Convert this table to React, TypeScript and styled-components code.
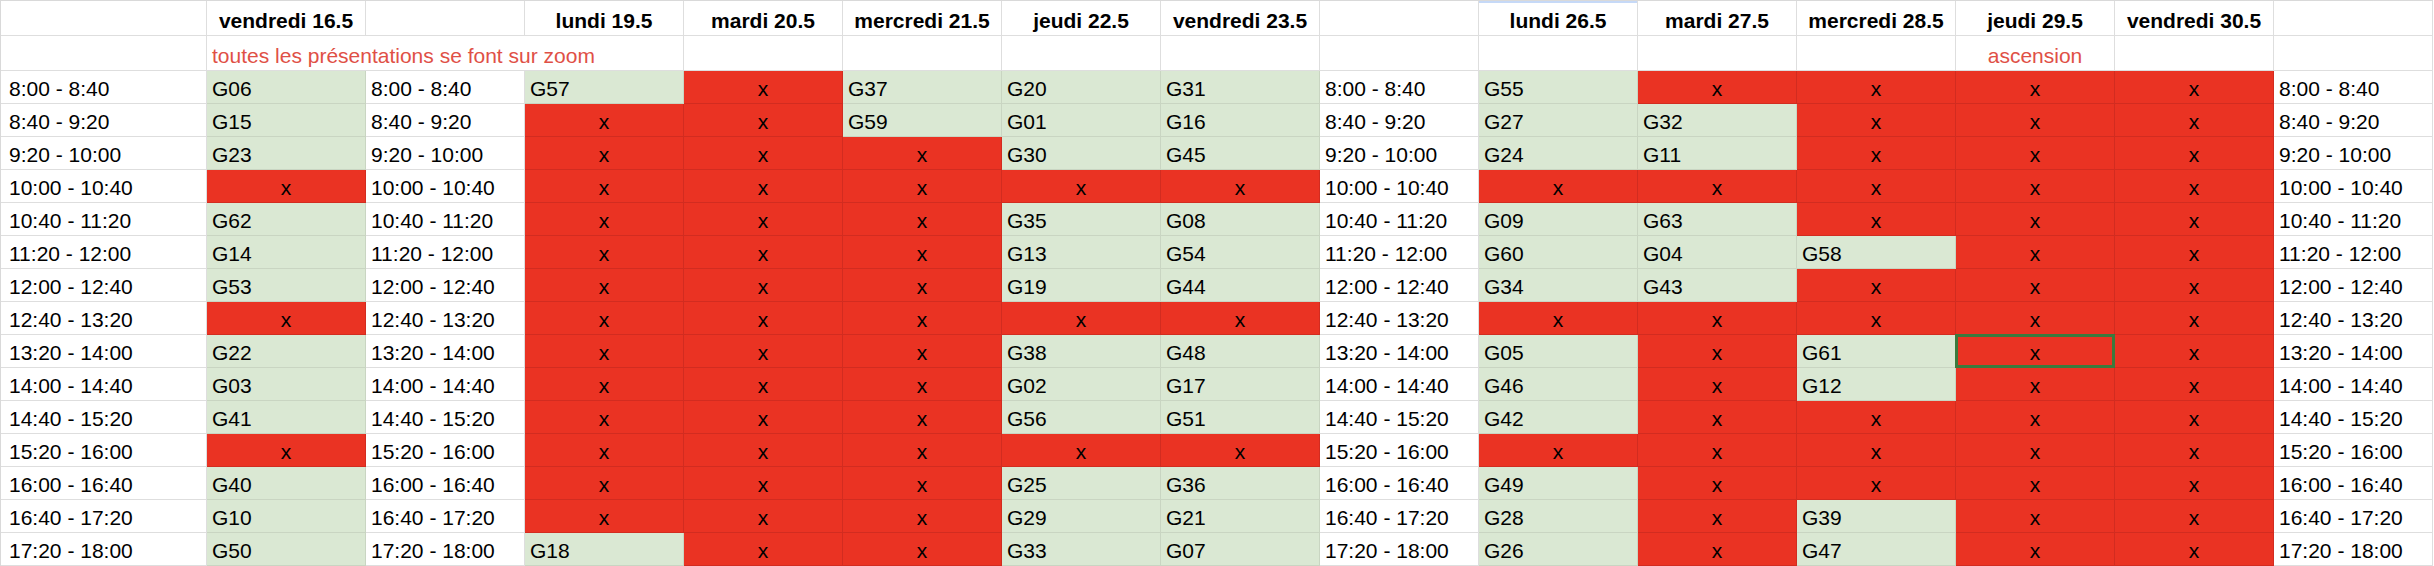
import React from "react";
import styled, { createGlobalStyle, css } from "styled-components";

const GlobalStyle = createGlobalStyle`
  html, body { margin: 0; padding: 0; background: #ffffff; }
  body { font-family: "Liberation Sans", Arial, sans-serif; }
`;

type Kind = "blank" | "head" | "note" | "time" | "slot" | "off";

const Sheet = styled.div`
  display: grid;
  grid-template-columns: 206px repeat(14, 159px);
  grid-template-rows: 35px 35px repeat(15, 33px);
  border-top: 1px solid #d9d9d9;
  border-left: 1px solid #d9d9d9;
  width: max-content;
  font-family: "Liberation Sans", Arial, sans-serif;
  font-size: 21px;
  color: #000000;
`;

const kindStyles: Record<Kind, ReturnType<typeof css>> = {
  blank: css`
    background: #ffffff;
  `,
  head: css`
    background: #ffffff;
    justify-content: center;
    font-weight: 700;
  `,
  note: css`
    background: #ffffff;
    color: #df5046;
  `,
  time: css`
    background: #ffffff;
  `,
  slot: css`
    background: #dae8d3;
    border-right-color: #c9d5c2;
    border-bottom-color: #c9d5c2;
  `,
  off: css`
    background: #ea3323;
    justify-content: center;
    border-right-color: #d22c20;
    border-bottom-color: #d22c20;
  `,
};

const Cell = styled.div<{ $kind: Kind; $first?: boolean; $span?: number; $center?: boolean; $mark?: boolean }>`
  position: relative;
  box-sizing: border-box;
  display: flex;
  align-items: flex-end;
  padding: 0 5px 2px ${(p) => (p.$first ? 8 : 5)}px;
  white-space: nowrap;
  line-height: normal;
  border-right: 1px solid #dedede;
  border-bottom: 1px solid #dedede;
  grid-column: span ${(p) => p.$span ?? 1};
  ${(p) => kindStyles[p.$kind]}
  ${(p) => p.$center && css`justify-content: center;`}
  ${(p) =>
    p.$mark &&
    css`
      background-image: linear-gradient(#c6d9f7, #c6d9f7);
      background-size: 100% 2px;
      background-repeat: no-repeat;
      background-position: top left;
    `}
`;

const Selection = styled.div`
  position: absolute;
  top: -1px;
  left: -1px;
  right: -1px;
  bottom: -1px;
  border: 3px solid #3b7a3d;
  pointer-events: none;
`;

const times = [
  "8:00 - 8:40",
  "8:40 - 9:20",
  "9:20 - 10:00",
  "10:00 - 10:40",
  "10:40 - 11:20",
  "11:20 - 12:00",
  "12:00 - 12:40",
  "12:40 - 13:20",
  "13:20 - 14:00",
  "14:00 - 14:40",
  "14:40 - 15:20",
  "15:20 - 16:00",
  "16:00 - 16:40",
  "16:40 - 17:20",
  "17:20 - 18:00",
];

const X = "x";
const allOff = Array(11).fill(X);
// columns: V16, L19, Ma20, Me21, J22, V23, L26, Ma27, Me28, J29, V30
const slots: string[][] = [
  ["G06", "G57", X, "G37", "G20", "G31", "G55", X, X, X, X],
  ["G15", X, X, "G59", "G01", "G16", "G27", "G32", X, X, X],
  ["G23", X, X, X, "G30", "G45", "G24", "G11", X, X, X],
  allOff,
  ["G62", X, X, X, "G35", "G08", "G09", "G63", X, X, X],
  ["G14", X, X, X, "G13", "G54", "G60", "G04", "G58", X, X],
  ["G53", X, X, X, "G19", "G44", "G34", "G43", X, X, X],
  allOff,
  ["G22", X, X, X, "G38", "G48", "G05", X, "G61", X, X],
  ["G03", X, X, X, "G02", "G17", "G46", X, "G12", X, X],
  ["G41", X, X, X, "G56", "G51", "G42", X, X, X, X],
  allOff,
  ["G40", X, X, X, "G25", "G36", "G49", X, X, X, X],
  ["G10", X, X, X, "G29", "G21", "G28", X, "G39", X, X],
  ["G50", "G18", X, X, "G33", "G07", "G26", X, "G47", X, X],
];

const selected = { row: 8, day: 9 };

function Slot({ value, isSelected }: { value: string; isSelected: boolean }) {
  const off = value === X;
  return (
    <Cell $kind={off ? "off" : "slot"}>
      {value}
      {isSelected && <Selection />}
    </Cell>
  );
}

export default function App() {
  return (
    <>
      <GlobalStyle />
      <Sheet>
        {/* header row */}
        <Cell $kind="blank" />
        <Cell $kind="head">vendredi 16.5</Cell>
        <Cell $kind="blank" />
        <Cell $kind="head">lundi 19.5</Cell>
        <Cell $kind="head">mardi 20.5</Cell>
        <Cell $kind="head">mercredi 21.5</Cell>
        <Cell $kind="head">jeudi 22.5</Cell>
        <Cell $kind="head">vendredi 23.5</Cell>
        <Cell $kind="blank" />
        <Cell $kind="head" $mark>lundi 26.5</Cell>
        <Cell $kind="head">mardi 27.5</Cell>
        <Cell $kind="head">mercredi 28.5</Cell>
        <Cell $kind="head">jeudi 29.5</Cell>
        <Cell $kind="head">vendredi 30.5</Cell>
        <Cell $kind="blank" />

        {/* note row */}
        <Cell $kind="blank" />
        <Cell $kind="note" $span={3}>toutes les présentations se font sur zoom</Cell>
        {Array.from({ length: 8 }).map((_, i) => (
          <Cell key={`n${i}`} $kind="blank" />
        ))}
        <Cell $kind="note" $center>ascension</Cell>
        <Cell $kind="blank" />
        <Cell $kind="blank" />

        {times.map((t, r) => {
          const row = slots[r];
          const sel = (d: number) => selected.row === r && selected.day === d;
          return (
            <React.Fragment key={t}>
              <Cell $kind="time" $first>{t}</Cell>
              <Slot value={row[0]} isSelected={sel(0)} />
              <Cell $kind="time">{t}</Cell>
              {row.slice(1, 6).map((v, i) => (
                <Slot key={`a${i}`} value={v} isSelected={sel(i + 1)} />
              ))}
              <Cell $kind="time">{t}</Cell>
              {row.slice(6, 11).map((v, i) => (
                <Slot key={`b${i}`} value={v} isSelected={sel(i + 6)} />
              ))}
              <Cell $kind="time">{t}</Cell>
            </React.Fragment>
          );
        })}
      </Sheet>
    </>
  );
}
